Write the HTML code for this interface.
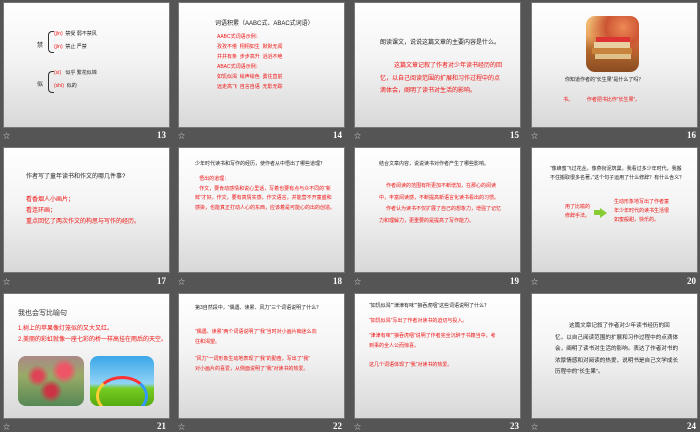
<!DOCTYPE html>
<html><head><meta charset="utf-8"><style>
*{margin:0;padding:0;box-sizing:border-box}
body{width:700px;height:431px;background:#555;position:relative;overflow:hidden;font-family:"Liberation Sans","Noto Sans CJK SC",sans-serif}
.s{position:absolute;width:167px;height:126px;background:linear-gradient(#fff 0%,#f4f4f4 45%,#d8d8d8 100%);border:1px solid #777;overflow:hidden}
.s div,.s span{position:absolute;white-space:nowrap}
.n{position:absolute;color:#fff;font:bold 9px "Liberation Serif",serif}
.i{position:absolute;color:#ddd;font-size:7px}
.k{color:#222}.r{color:#e11}
.f6{font-size:6px}.f5{font-size:5px;line-height:9px}.f7{font-size:7px}
</style></head><body>

<!-- row1 -->
<div class="s" style="left:3px;top:2px">
<div class="f6 k" style="left:33px;top:37px">禁</div>
<div style="left:44px;top:28px;width:6px;height:22px;border:1px solid #333;border-right:none;border-radius:4px 0 0 4px"></div>
<div class="f5" style="left:50px;top:27px"><span class="r" style="position:static">(jīn)</span> <span class="k" style="position:static">&nbsp;禁受 弱不禁风</span></div>
<div class="f5" style="left:50px;top:40px"><span class="r" style="position:static">(jìn)</span> <span class="k" style="position:static">&nbsp;禁止 严禁</span></div>
<div class="f6 k" style="left:33px;top:76px">似</div>
<div style="left:44px;top:68px;width:6px;height:22px;border:1px solid #333;border-right:none;border-radius:4px 0 0 4px"></div>
<div class="f5" style="left:50px;top:66px"><span class="r" style="position:static">(sì)</span> <span class="k" style="position:static">&nbsp;&nbsp;似乎 繁花似锦</span></div>
<div class="f5" style="left:50px;top:79px"><span class="r" style="position:static">(shì)</span> <span class="k" style="position:static">&nbsp;似的</span></div>
</div>
<div class="s" style="left:178px;top:2px">
<div class="f6 k" style="left:36px;top:15px">词语积累（AABC式、ABAC式词语）</div>
<div class="f5 r" style="left:38px;top:29px;line-height:10px">AABC式词语示例：<br>孜孜不倦&nbsp;&nbsp;栩栩如生&nbsp;&nbsp;默默无闻<br>井井有条&nbsp;&nbsp;步步高升&nbsp;&nbsp;滔滔不绝<br>ABAC式词语示例：<br>如饥似渴&nbsp;&nbsp;绘声绘色&nbsp;&nbsp;勇往直前<br>远走高飞&nbsp;&nbsp;自言自语&nbsp;&nbsp;无影无踪</div>
</div>
<div class="s" style="left:354px;top:2px">
<div class="f6 k" style="left:25px;top:34px">朗读课文，说说这篇文章的主要内容是什么。</div>
<div class="f6 r" style="left:25px;top:57px;line-height:12.5px;white-space:normal;width:122px;text-indent:14px">这篇文章记叙了作者对少年读书经历的回忆，以自己阅读范围的扩展和习作过程中的点滴体会，阐明了读书对生活的影响。</div>
</div>
<div class="s" style="left:531px;top:2px">
<div style="left:54px;top:13px;width:53px;height:56px;border-radius:9px;background:radial-gradient(circle at 70% 20%,#e85 0%,#c53 30%,transparent 60%),linear-gradient(#f3c37a 0%,#e9a862 35%,#b56a2e 60%,#8a4b22 100%)"></div>
<div style="left:64px;top:34px;width:34px;height:5px;background:#d33"></div>
<div style="left:62px;top:39px;width:36px;height:6px;background:#e8d0a0"></div>
<div style="left:60px;top:45px;width:40px;height:6px;background:#c8843c"></div>
<div style="left:63px;top:51px;width:36px;height:5px;background:#e0c08a"></div>
<div class="f5 k" style="left:33px;top:73px">你知道作者的“长生果”是什么了吗？</div>
<div class="f5 r" style="left:31px;top:93px">书。&nbsp;&nbsp;&nbsp;&nbsp;&nbsp;&nbsp;&nbsp;&nbsp;&nbsp;&nbsp;作者把书比作“长生果”。</div>
</div>
<span class="i" style="left:3px;top:131px">☆</span><span class="n" style="left:157px;top:130px">13</span>
<span class="i" style="left:178px;top:131px">☆</span><span class="n" style="left:333px;top:130px">14</span>
<span class="i" style="left:354px;top:131px">☆</span><span class="n" style="left:510px;top:130px">15</span>
<span class="i" style="left:531px;top:131px">☆</span><span class="n" style="left:687px;top:130px">16</span>

<!-- row2 -->
<div class="s" style="left:3px;top:147px">
<div class="f6 k" style="left:22px;top:23px">作者写了童年读书和作文的哪几件事?</div>
<div class="f6 r" style="left:22px;top:47px;line-height:11px">看香烟人小画片；<br>看连环画；<br>重点回忆了两次作文的构思与写作的经历。</div>
</div>
<div class="s" style="left:178px;top:147px">
<div class="f5 k" style="left:16px;top:12px">少年时代读书和写作的经历，使作者从中悟出了哪些道理？</div>
<div class="f5 r" style="left:16px;top:27px;white-space:normal;width:140px;line-height:9.5px">&nbsp;&nbsp;&nbsp;悟出的道理：<br>&nbsp;&nbsp;&nbsp;作文，要肯动感情和说心里话，写着也要有点与众不同的“新鲜”才好。作文，要有真情实感，作文语言，并能营不开童盛和感染，也能真正打动人心的东西，应该着是可能心的出的创造。</div>
</div>
<div class="s" style="left:354px;top:147px">
<div class="f5 k" style="left:24px;top:12px">结合文章内容，说说读书对作者产生了哪些影响。</div>
<div class="f5 r" style="left:24px;top:33px;white-space:normal;width:125px;line-height:11.5px">&nbsp;&nbsp;&nbsp;&nbsp;&nbsp;作者阅读的范围有所更加不断增加，在那心的阅读中，丰富阅读感，不断提高新语言化读书看出的习惯。<br>&nbsp;&nbsp;&nbsp;&nbsp;&nbsp;作者认为读书不仅扩展了自己的想象力，增强了记忆力和理解力，更重要的是提高了写作能力。</div>
</div>
<div class="s" style="left:531px;top:147px">
<div class="f5 k" style="left:18px;top:17px;white-space:normal;width:135px;line-height:9px">“像蜂蜜飞过花丛，像燕衔泥筑巢，我看过多少年时代，我搬不住搬取很多名著，”这个句子运用了什么修辞？有什么含义？</div>
<div class="f5 r" style="left:33px;top:55px;line-height:9px">用了比喻的<br>修辞手法。</div>
<div style="left:63px;top:60px;width:0;height:0;border-left:7px solid #8c3;border-top:5px solid transparent;border-bottom:5px solid transparent;left:68px"></div>
<div style="left:62px;top:62px;width:6px;height:5px;background:#8c3"></div>
<div class="f5 r" style="left:82px;top:50px;line-height:9px">生动形象地写出了作者童<br>年少年时代的读书生活很<br>如蜜般甜，快乐的。</div>
</div>
<span class="i" style="left:3px;top:277px">☆</span><span class="n" style="left:157px;top:276px">17</span>
<span class="i" style="left:178px;top:277px">☆</span><span class="n" style="left:333px;top:276px">18</span>
<span class="i" style="left:354px;top:277px">☆</span><span class="n" style="left:510px;top:276px">19</span>
<span class="i" style="left:531px;top:277px">☆</span><span class="n" style="left:687px;top:276px">20</span>

<!-- row3 -->
<div class="s" style="left:3px;top:293px">
<div class="f7" style="left:14px;top:14px;color:#333">我也会写比喻句</div>
<div class="f6 r" style="left:14px;top:30px;line-height:11px">1.树上的苹果像灯笼似的又大又红。<br>2.美丽的彩虹就像一座七彩的桥一样高挂在雨后的天空。</div>
<div style="left:14px;top:62px;width:66px;height:50px;border-radius:8px;background:radial-gradient(circle at 30% 40%,#d45 0 8%,transparent 20%),radial-gradient(circle at 70% 30%,#e56 0 10%,transparent 22%),radial-gradient(circle at 50% 70%,#c34 0 10%,transparent 24%),linear-gradient(#a88,#9a6 40%,#585 100%)"></div>
<div style="left:86px;top:62px;width:64px;height:50px;border-radius:8px;overflow:hidden;background:linear-gradient(#3aa6e8,#8fd3f5 55%,#7c2 65%,#5a1 100%)">
<div style="left:6px;top:20px;width:52px;height:40px;border-radius:50%;border:3px solid transparent;border-top-color:#f33;border-left-color:#fc3;border-right-color:#39f"></div></div>
</div>
<div class="s" style="left:178px;top:293px">
<div class="f5 k" style="left:16px;top:10px">第3自然段中，“偶遇、读累、风力”三个词语说明了什么？</div>
<div class="f5 r" style="left:16px;top:33px;line-height:10px">“偶遇、读累”两个词语说明了“我”当时对小画片痴迷么向<br>往和渴望。</div>
<div class="f5 r" style="left:16px;top:60px;line-height:10px">“风力”一词形象生动地表现了“我”的勤奋，写出了“我”<br>对小画片的喜爱，从侧面说明了“我”对读书的热爱。</div>
</div>
<div class="s" style="left:354px;top:293px">
<div class="f5 k" style="left:14px;top:8px">“如饥似渴”“津津有味”“狼吞虎咽”这些词语说明了什么？</div>
<div class="f5 r" style="left:14px;top:23px">“如饥似渴”写出了作者对读书的迫切与投入。</div>
<div class="f5 r" style="left:14px;top:37px;line-height:10px">“津津有味”“狼吞虎咽”说明了作者完全沉醉于书籍当中，考<br>到事的全人公而惊喜。</div>
<div class="f5 r" style="left:14px;top:67px">这几个词语体现了“我”对读书的热爱。</div>
</div>
<div class="s" style="left:531px;top:293px">
<div class="f6 k" style="left:23px;top:27px;white-space:normal;width:125px;line-height:11.5px;text-indent:14px;font-size:5.6px">这篇文章记叙了作者对少年读书经历的回忆，以自己阅读范围的扩展和习作过程中的点滴体会，阐明了读书对生活的影响。表达了作者对书的浓厚情感和对阅读的热爱，说明书是自己文学成长历程中的“长生果”。</div>
</div>
<span class="i" style="left:3px;top:422px">☆</span><span class="n" style="left:157px;top:421px">21</span>
<span class="i" style="left:178px;top:422px">☆</span><span class="n" style="left:333px;top:421px">22</span>
<span class="i" style="left:354px;top:422px">☆</span><span class="n" style="left:510px;top:421px">23</span>
<span class="i" style="left:531px;top:422px">☆</span><span class="n" style="left:687px;top:421px">24</span>
</body></html>
